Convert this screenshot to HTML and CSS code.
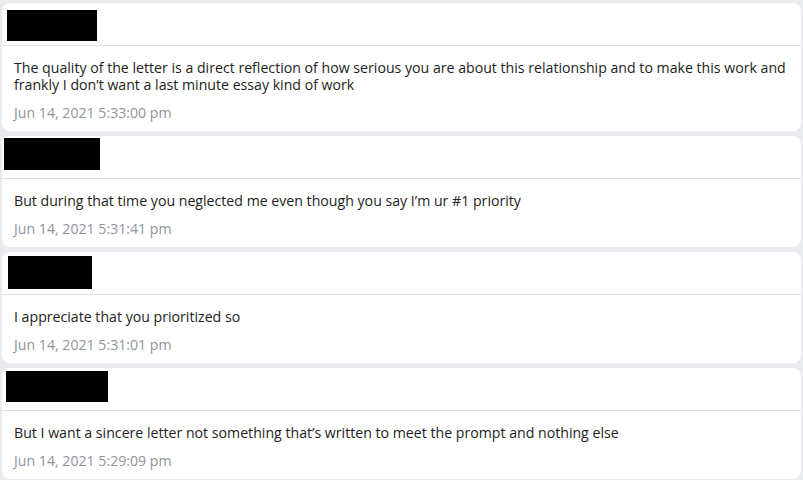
FILE: index.html
```html
<!DOCTYPE html>
<html lang="en">
<head>
  <meta charset="UTF-8" />
  <meta name="viewport" content="width=device-width, initial-scale=1.0">
  <title>Messages</title>

  <link rel="stylesheet" href="styles.css">
</head>
<body>
  <div class="thread">
    <div class="msg">
      <div class="msg-head p1"><div class="redact r1"></div></div>
      <div class="msg-body">
        <div class="msg-text">The quality of the letter is a direct reflection of how serious you are about this relationship and to make this work and frankly I don’t want a last minute essay kind of work</div>
        <div class="msg-time">Jun 14, 2021 5:33:00 pm</div>
      </div>
    </div>
    <div class="msg">
      <div class="msg-head p2"><div class="redact r2"></div></div>
      <div class="msg-body">
        <div class="msg-text">But during that time you neglected me even though you say I’m ur #1 priority</div>
        <div class="msg-time">Jun 14, 2021 5:31:41 pm</div>
      </div>
    </div>
    <div class="msg">
      <div class="msg-head p3"><div class="redact r3"></div></div>
      <div class="msg-body">
        <div class="msg-text">I appreciate that you prioritized so</div>
        <div class="msg-time">Jun 14, 2021 5:31:01 pm</div>
      </div>
    </div>
    <div class="msg">
      <div class="msg-head p4"><div class="redact r4"></div></div>
      <div class="msg-body">
        <div class="msg-text">But I want a sincere letter not something that’s written to meet the prompt and nothing else</div>
        <div class="msg-time">Jun 14, 2021 5:29:09 pm</div>
      </div>
    </div>
  </div>
</body>
</html>
```

FILE: styles.css
```css
body {
  margin: 0;
  background: #e9ebee;
  font-family: "Open Sans", "Noto Sans", Arial, sans-serif;
  color: #1c1e21;
}
.thread {
  display: flex;
  flex-direction: column;
  gap: 5px;
  padding: 3px 2px 0 2px;
}
.msg {
  background: #fff;
  border-radius: 8px;
  overflow: hidden;
}
.msg-head {
  box-sizing: border-box;
  height: 43px;
  border-bottom: 1px solid #dddfe2;
}
/* redaction boxes sit a little differently on each card */
.p1 { padding: 7px 0 0 5px; }
.p2 { padding: 2px 0 0 2px; }
.p3 { padding: 4px 0 0 6px; }
.p4 { padding: 3px 0 0 4px; }
.redact { background: #000; }
.r1 { width: 90px; height: 31px; }
.r2 { width: 96px; height: 32px; }
.r3 { width: 84px; height: 33px; }
.r4 { width: 102px; height: 31px; }
.msg-body {
  padding: 13px 12px 10px;
}
.msg-text {
  font-size: 14.15px;
  line-height: 17px;
}
.msg-time {
  margin-top: 11px;
  font-size: 14.15px;
  line-height: 17px;
  color: #90949c;
}
```
